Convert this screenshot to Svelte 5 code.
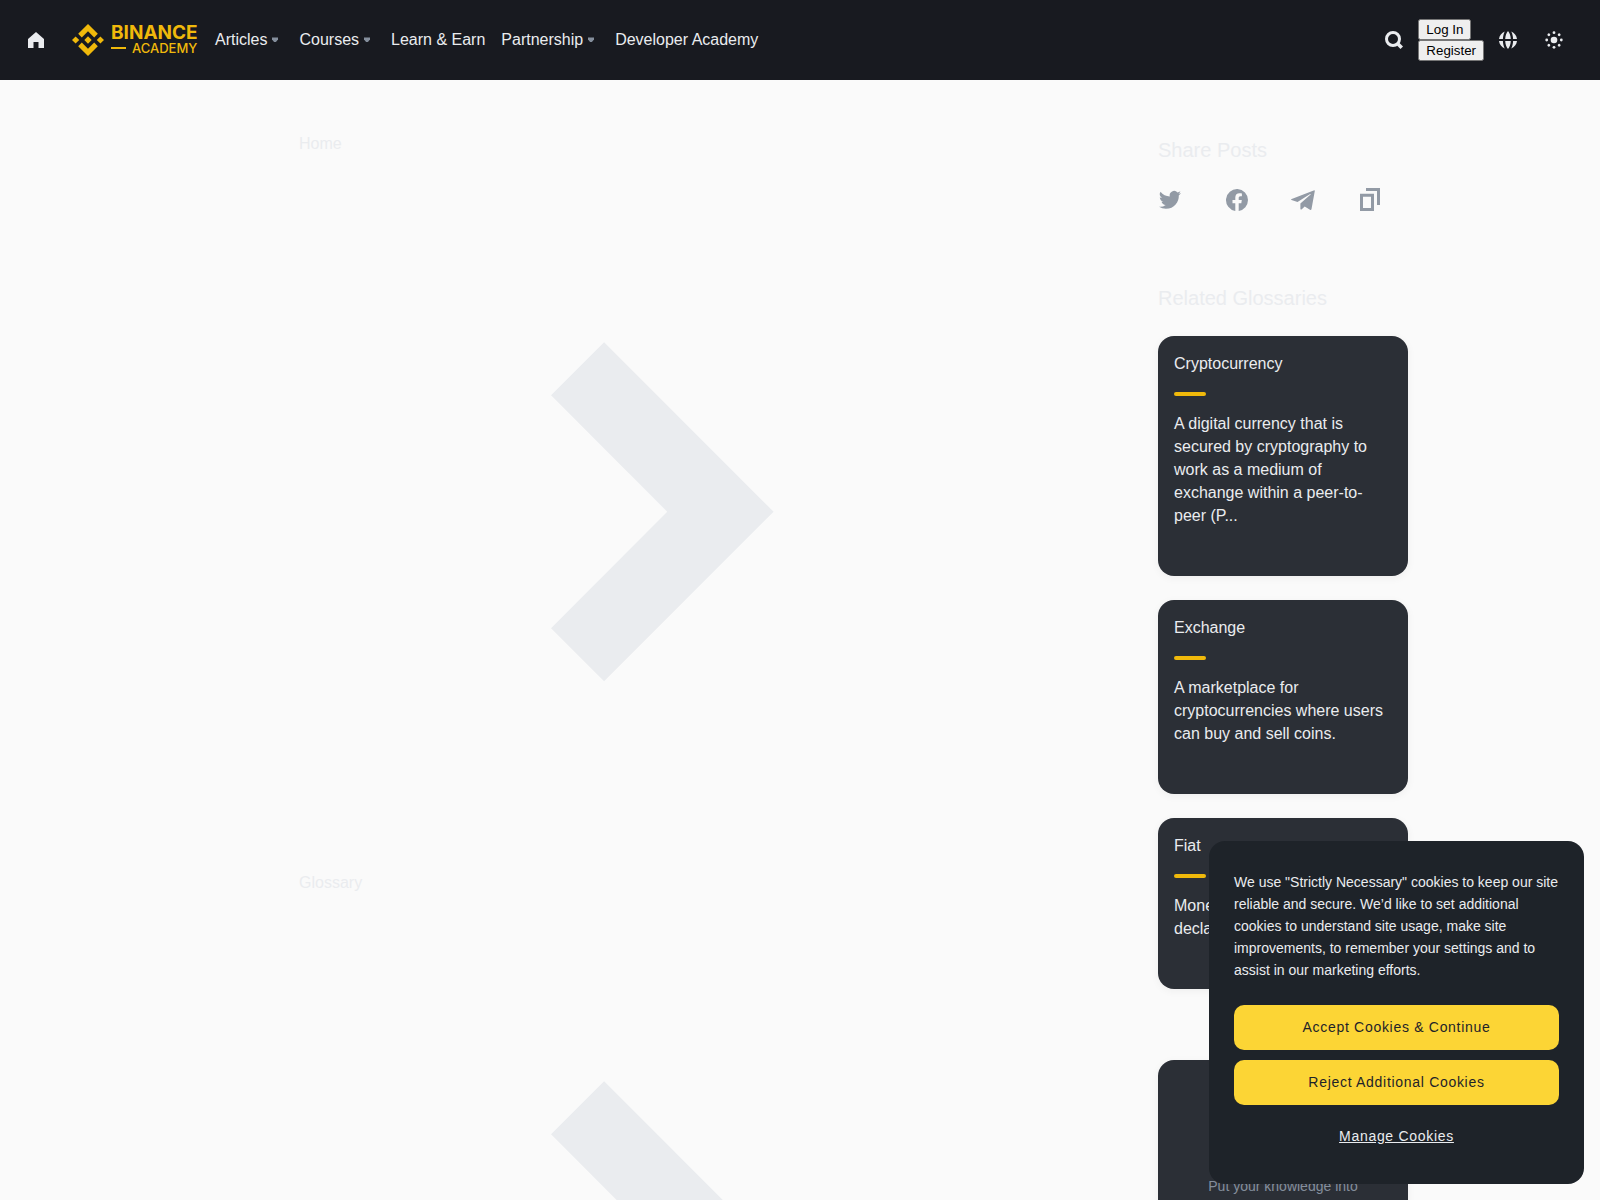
<script>
  let showCookies = true;

  const navItems = [
    { name: "Articles", menu: true },
    { name: "Courses", menu: true },
    { name: "Learn & Earn", menu: false },
    { name: "Partnership", menu: true },
    { name: "Developer Academy", menu: false },
  ];

  const crumbs = ["Home", "Glossary"];

  const glossaries = [
    {
      title: "Cryptocurrency",
      text: "A digital currency that is secured by cryptography to work as a medium of exchange within a peer-to-peer (P...",
    },
    {
      title: "Exchange",
      text: "A marketplace for cryptocurrencies where users can buy and sell coins.",
    },
    {
      title: "Fiat",
      text: "Money that a government has declared legal tender.",
    },
  ];

  const shareLinks = [
    {
      name: "Twitter",
      path: "M23 5.100a9 9 0 0 1-2.600.7 4.500 4.500 0 0 0 2-2.500 9 9 0 0 1-2.900 1.100 4.500 4.500 0 0 0-7.700 4.100A12.900 12.900 0 0 1 2.500 3.800a4.500 4.500 0 0 0 1.400 6 4.500 4.500 0 0 1-2.100-.6c0 2.200 1.600 4.100 3.700 4.500a4.500 4.500 0 0 1-2 .1 4.500 4.500 0 0 0 4.200 3.100A9.100 9.100 0 0 1 1 18.800a12.800 12.800 0 0 0 6.900 2c8.400 0 13.200-7.100 12.900-13.400A9.200 9.200 0 0 0 23 5.100z",
    },
    {
      name: "Facebook",
      path: "M23 12a11 11 0 1 0-12.700 10.900v-7.700H7.500V12h2.800V9.600c0-2.800 1.600-4.300 4.100-4.300 1.200 0 2.500.2 2.500.2v2.700h-1.400c-1.400 0-1.800.9-1.800 1.700V12h3.100l-.5 3.200h-2.600v7.700A11 11 0 0 0 23 12z",
    },
    {
      name: "Telegram",
      path: "M23.300 2.300q.6-.1.500.6L20.500 21q-.3 1.500-1.500.8l-5.300-3.300-2.900 2.700q-.8.800-1.400-.2V15.600L19.600 6.400q.2-.6-.4-.3L6.500 14 .5 12q-1-.6.2-1.100z",
    },
    {
      name: "Copy link",
      path: "M8 0h14v17h-3V3H8zM2 5.700h14V23H2zm3 3V20h8V8.700z",
    },
  ];

  function closeCookies() {
    showCookies = false;
  }
</script>

<div class="page">
  <header>
    <a class="icon-link" href="#home" aria-label="Home">
      <svg width="24" height="24" viewBox="0 0 24 24">
        <path d="M12 4l8 7v9h-5.500v-6h-5v6H4v-9z" />
      </svg>
    </a>
    <a class="logo" href="#academy">
      <svg width="32" height="32" viewBox="0 0 126.600 126.600">
        <path d="M38.730 53.200L63.300 28.630l24.580 24.580 14.290-14.300L63.300 0 24.430 38.900zM0 63.300L14.300 49l14.300 14.300-14.300 14.300zM38.730 73.400L63.300 98l24.580-24.600 14.300 14.290L63.300 126.600 24.430 87.730zM98 63.300L112.300 49l14.300 14.300-14.300 14.300zM77.830 63.300L63.300 48.780 48.800 63.280 63.300 77.800z" />
      </svg>
      <span class="logo-text">
        <span class="brand">BINANCE</span>
        <span class="sub"><i></i>ACADEMY</span>
      </span>
    </a>
    <nav>
      {#each navItems as item}
        <a href="#nav">
          {item.name}
          {#if item.menu}
            <svg width="16" height="16" viewBox="0 0 16 16">
              <path d="M5 5.500h6v2L8.900 10H7.100L5 7.500z" />
            </svg>
          {/if}
        </a>
      {/each}
    </nav>
    <div class="actions">
      <button class="icon-btn" aria-label="Search">
        <svg width="24" height="24" viewBox="0 0 24 24">
          <circle cx="11" cy="11" r="6.500" fill="none" stroke="currentColor" stroke-width="3" />
          <path d="M14 16.500l2.500-2.500 4.500 4.500-2.500 2.500z" />
        </svg>
      </button>
      <div class="account">
        <button>Log In</button>
        <button>Register</button>
      </div>
      <button class="icon-btn" aria-label="Language">
        <svg width="24" height="24" viewBox="0 0 24 24">
          <path d="M9.200 11c.2-3.600 1.300-6.500 2.800-8 1.500 1.500 2.600 4.400 2.800 8zM9.200 13c.2 3.600 1.300 6.500 2.800 8 1.500-1.500 2.600-4.400 2.800-8zM3 11c.4-3.500 2.700-6.300 5.800-7.500C7.700 5.500 7 8.200 6.900 11zM3 13c.4 3.500 2.700 6.300 5.800 7.500-1.100-2-1.800-4.700-1.900-7.500zM21 11c-.4-3.500-2.700-6.300-5.800-7.500 1.100 2 1.800 4.700 1.900 7.500zM21 13c-.4 3.500-2.700 6.300-5.800 7.500 1.100-2 1.800-4.700 1.900-7.500z" />
        </svg>
      </button>
      <button class="icon-btn theme" aria-label="Theme">
        <svg width="24" height="24" viewBox="0 0 24 24">
          <circle cx="12" cy="12" r="3.300" />
          {#each [0, 45, 90, 135, 180, 225, 270, 315] as angle}
            <circle cx="12" cy="4.700" r="1.400" transform="rotate({angle} 12 12)" />
          {/each}
        </svg>
      </button>
    </div>
  </header>

  <main>
    <div class="crumbs">
      {#each crumbs as crumb}
        <div class="crumb">
          <a href="#crumb">{crumb}</a>
          <svg viewBox="0 0 24 24">
            <path d="M12.360 11.940L8.460 8.030l1.780-1.780 5.690 5.690-5.690 5.690-1.780-1.780z" />
          </svg>
        </div>
      {/each}
    </div>

    <aside>
      <h2>Share Posts</h2>
      <div class="share">
        {#each shareLinks as link}
          <a href="#share" aria-label={link.name}>
            <svg width="24" height="24" viewBox="0 0 24 24">
              <path fill-rule="evenodd" d={link.path} />
            </svg>
          </a>
        {/each}
      </div>

      <h2>Related Glossaries</h2>
      <div class="cards">
        {#each glossaries as item}
          <a class="card" href="#glossary">
            <h3>{item.title}</h3>
            <div class="line"></div>
            <p>{item.text}</p>
          </a>
        {/each}
      </div>

      <div class="card quiz">
        <p>Put your knowledge into practice</p>
      </div>
    </aside>
  </main>
</div>

{#if showCookies}
  <div class="cookies" role="dialog" aria-label="Cookies">
    <p>
      We use "Strictly Necessary" cookies to keep our site reliable and secure. We’d like to set
      additional cookies to understand site usage, make site improvements, to remember your settings
      and to assist in our marketing efforts.
    </p>
    <button class="yellow" on:click={closeCookies}>Accept Cookies &amp; Continue</button>
    <button class="yellow" on:click={closeCookies}>Reject Additional Cookies</button>
    <button class="manage">Manage Cookies</button>
  </div>
{/if}

<style>
  :global(body) {
    background: #fafafa;
    font-family: "Liberation Sans", Arial, sans-serif;
  }

  .page {
    height: 100vh;
    overflow: hidden;
  }

  a {
    color: inherit;
    text-decoration: none;
  }

  svg {
    display: block;
    fill: currentColor;
  }

  h2, h3, p {
    margin: 0;
    font-weight: 400;
  }

  /* header */
  header {
    display: flex;
    align-items: center;
    height: 80px;
    padding: 0 34px 0 24px;
    box-sizing: border-box;
    background: #181a20;
    color: #eaecef;
  }

  .logo {
    display: flex;
    align-items: center;
    gap: 7px;
    width: 128px;
    margin: 0 15px 0 24px;
    color: #f0b90b;
    font-family: Inter, sans-serif;
  }

  .logo-text {
    display: flex;
    flex-direction: column;
  }

  .brand {
    font-size: 19px;
    font-weight: 700;
    line-height: 16px;
  }

  .sub {
    display: flex;
    align-items: center;
    gap: 6px;
    font-size: 13px;
    font-weight: 500;
    line-height: 14px;
  }

  .sub i {
    width: 15px;
    height: 2px;
    background: #f0b90b;
  }

  nav {
    display: flex;
    gap: 16px;
  }

  nav a {
    display: flex;
    align-items: center;
    font-size: 16px;
    line-height: 24px;
    white-space: nowrap;
  }

  nav svg {
    color: #848e9c;
  }

  .actions {
    display: flex;
    align-items: center;
    gap: 12px;
    margin-left: auto;
  }

  .icon-btn {
    padding: 0;
    border: none;
    background: none;
    color: #eaecef;
    cursor: pointer;
  }

  .theme {
    margin-left: 10px;
  }

  .account {
    display: flex;
    flex-direction: column;
    align-items: flex-start;
  }

  /* content */
  main {
    display: grid;
    grid-template-columns: 1fr 250px;
    gap: 37px;
    max-width: 1216px;
    margin: 0 auto;
    padding-top: 52px;
    color: #eaecef;
  }

  .crumbs {
    padding: 0 107px;
  }

  .crumb a {
    display: block;
    font-size: 16px;
    line-height: 24px;
  }

  .crumb svg {
    width: 100%;
  }

  h2 {
    font-size: 20px;
    line-height: 36px;
  }

  .share {
    display: flex;
    justify-content: space-between;
    width: 224px;
    margin: 20px 0 68px;
    color: #929aa5;
  }

  .cards {
    display: flex;
    flex-direction: column;
    gap: 24px;
    margin: 20px 0 71px;
  }

  .card {
    display: block;
    padding: 16px 16px 49px;
    border-radius: 16px;
    background: #2b2f36;
    box-shadow: 0 2px 8px rgba(0, 0, 0, 0.05);
    font-size: 16px;
    line-height: 23px;
  }

  .card h3 {
    font-size: 16px;
    line-height: 24px;
  }

  .line {
    width: 32px;
    height: 4px;
    margin: 16px 0;
    border-radius: 2px;
    background: #f0b90b;
  }

  .quiz {
    padding: 115px 48px 48px;
    color: #848e9c;
    text-align: center;
  }

  .quiz p {
    font-size: 14px;
    line-height: 22px;
  }

  /* cookie banner */
  .cookies {
    position: fixed;
    right: 16px;
    bottom: 16px;
    display: flex;
    flex-direction: column;
    width: 375px;
    padding: 30px 25px 26px;
    box-sizing: border-box;
    border-radius: 16px;
    background: #1e2329;
    color: #eaecef;
    font-size: 14px;
    line-height: 22px;
  }

  .cookies p {
    margin-bottom: 24px;
  }

  .cookies button {
    padding: 0 0 2px;
    border: none;
    font-family: inherit;
    font-size: 14px;
    letter-spacing: 0.05em;
    cursor: pointer;
  }

  .yellow {
    height: 45px;
    margin-bottom: 10px;
    border-radius: 10px;
    background: #fcd535;
    color: #1e2329;
  }

  .cookies .manage {
    height: 43px;
    background: none;
    color: #eaecef;
    text-decoration: underline;
  }
</style>
